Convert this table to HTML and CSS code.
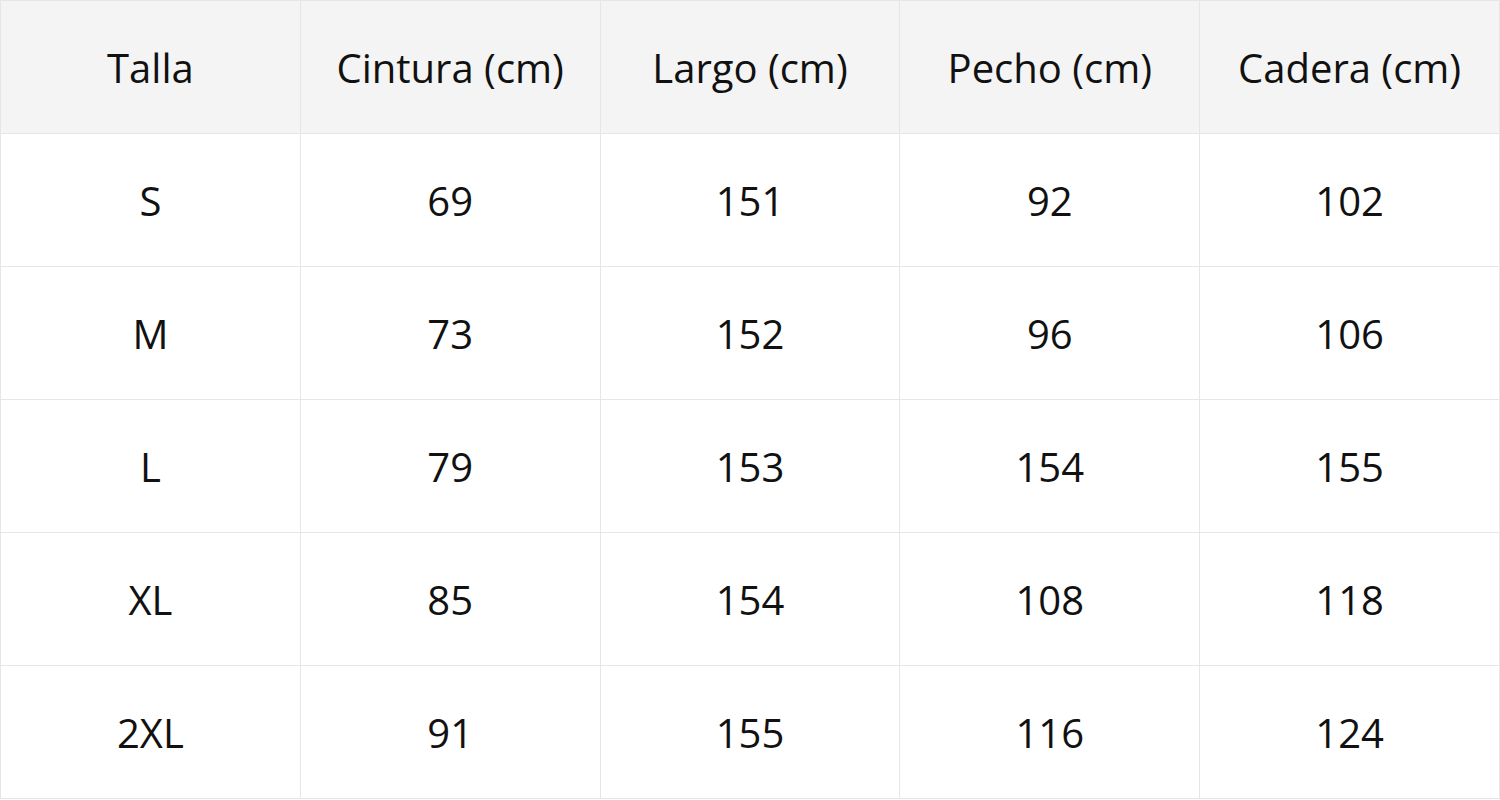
FILE: index.html
```html
<!DOCTYPE html>
<html lang="es">
<head>
<meta charset="utf-8">
<title>Tabla de tallas</title>
<link rel="stylesheet" href="styles.css">
</head>
<body>
<table class="sizes">
  <thead>
    <tr><th>Talla</th><th>Cintura (cm)</th><th>Largo (cm)</th><th>Pecho (cm)</th><th>Cadera (cm)</th></tr>
  </thead>
  <tbody>
    <tr><td>S</td><td>69</td><td>151</td><td>92</td><td>102</td></tr>
    <tr><td>M</td><td>73</td><td>152</td><td>96</td><td>106</td></tr>
    <tr><td>L</td><td>79</td><td>153</td><td>154</td><td>155</td></tr>
    <tr><td>XL</td><td>85</td><td>154</td><td>108</td><td>118</td></tr>
    <tr><td>2XL</td><td>91</td><td>155</td><td>116</td><td>124</td></tr>
  </tbody>
</table>
</body>
</html>
```
FILE: styles.css
```css
html, body {
  margin: 0;
  padding: 0;
  background: #ffffff;
}
.sizes {
  border-collapse: collapse;
  width: 1500px;
  table-layout: fixed;
  font-family: "Open Sans", "Liberation Sans", sans-serif;
  font-size: 40px;
  color: #111111;
}
.sizes th,
.sizes td {
  border: 1px solid #e6e6e6;
  height: 132px;
  padding: 0;
  text-align: center;
  vertical-align: middle;
  font-weight: 400;
}
.sizes th {
  background: #f4f4f4;
}
```
